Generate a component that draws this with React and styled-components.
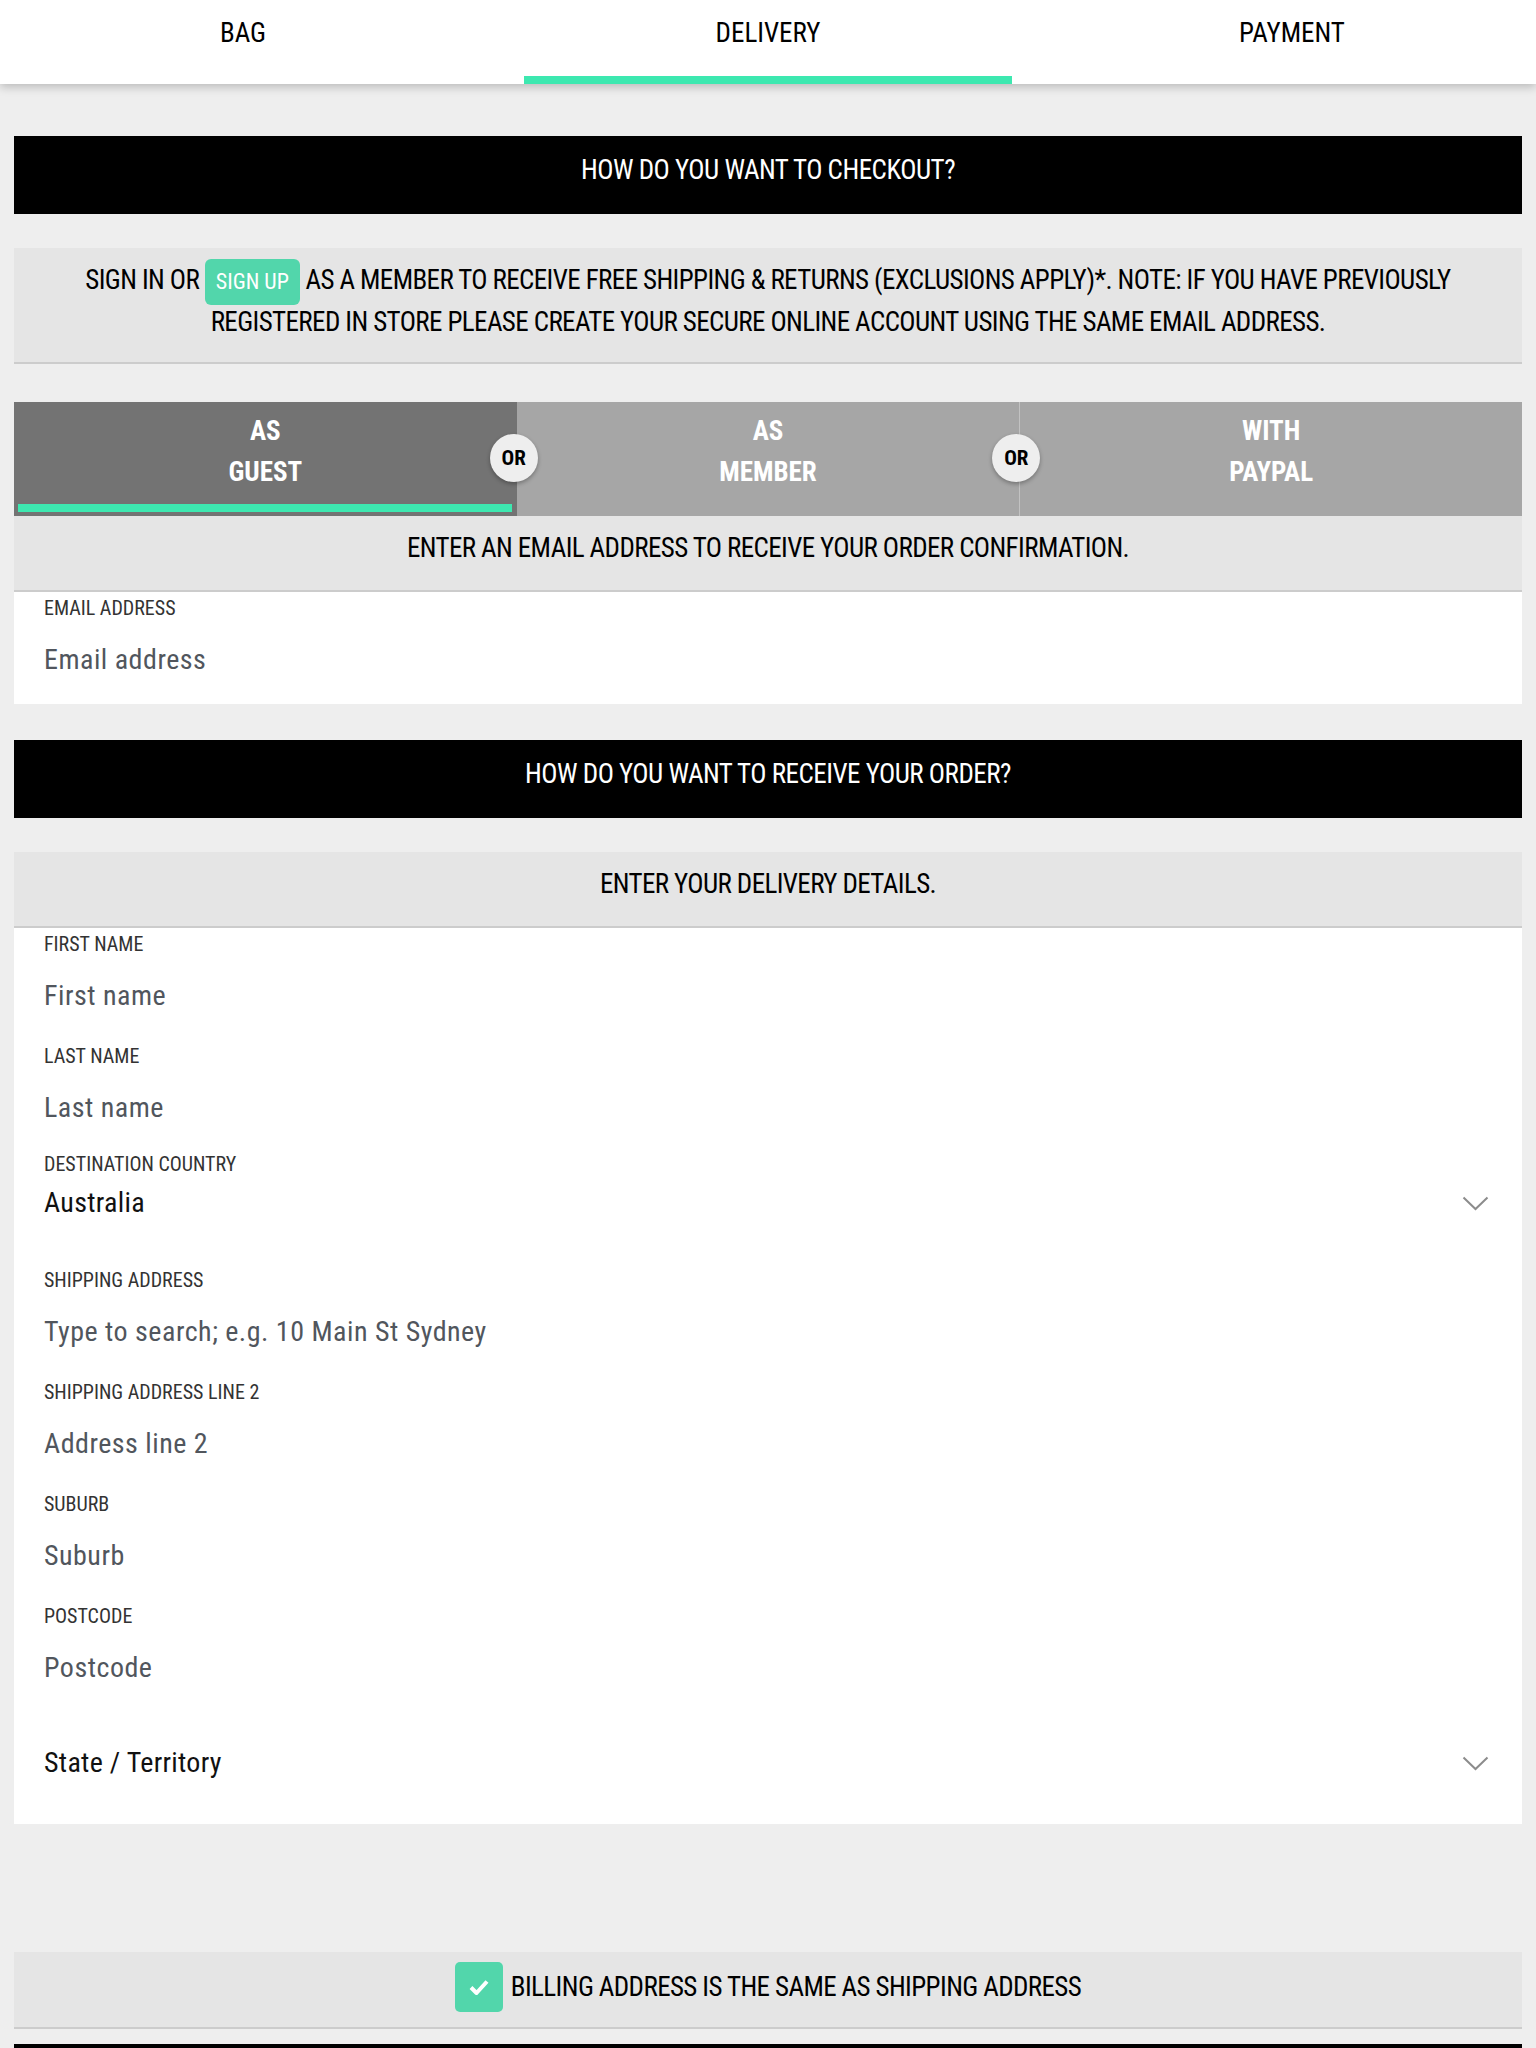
import React, { useState } from 'react';
import styled, { createGlobalStyle } from 'styled-components';

const GlobalStyle = createGlobalStyle`
  body {
    margin: 0;
    background: #eeeeee;
    font-family: Roboto, "Liberation Sans", Arial, sans-serif;
    font-stretch: 75%;
    color: #000;
  }
  * {
    box-sizing: border-box;
  }
`;

const StyledNav = styled.nav`
  display: grid;
  grid-template-columns: repeat(3, 1fr);
  height: 84px;
  background: #fff;
  box-shadow: 0 3px 9px rgba(0, 0, 0, 0.22);
  position: relative;
  z-index: 2;
`;
const StyledNavTab = styled.div`
  display: flex;
  flex-direction: column;
  justify-content: space-between;
  cursor: pointer;
`;
const StyledNavLabel = styled.span`
  padding: 18px ${(p) => p.$padR || 0}px 0 ${(p) => p.$padL || 0}px;
  text-align: center;
  font-size: 27px;
  line-height: 30px;
`;
const StyledNavBar = styled.span`
  height: 8px;
  margin: 0 12px;
  background: ${(p) => (p.$active ? '#3de8b0' : 'transparent')};
`;

const StyledMain = styled.main`
  display: flex;
  flex-direction: column;
  padding: 52px 14px 0;
`;
const StyledBanner = styled.div`
  background: #000;
  color: #fff;
  height: 78px;
  padding-top: 19px;
  margin-top: ${(p) => p.$mt || 0}px;
  text-align: center;
  font-size: 27px;
  letter-spacing: -0.5px;
  line-height: 30px;
`;
const StyledNote = styled.div`
  background: #e5e5e5;
  border-bottom: 2px solid #cccccc;
  margin-top: ${(p) => p.$mt || 0}px;
  padding: ${(p) => p.$pad || '17px 30px 0'};
  height: ${(p) => p.$h}px;
  text-align: center;
  font-size: 27px;
  letter-spacing: -0.6px;
  line-height: ${(p) => p.$lh || 30}px;
`;
const StyledSignUp = styled.a`
  display: inline-block;
  background: #52d6ab;
  color: #fff;
  font-size: 22px;
  letter-spacing: 0;
  line-height: 24px;
  padding: 11px 11px;
  margin: -6px 0;
  border-radius: 6px;
  text-decoration: none;
  cursor: pointer;
`;

const StyledToggle = styled.div`
  display: grid;
  grid-template-columns: repeat(3, 1fr);
  height: 114px;
  margin-top: 38px;
`;
const StyledOption = styled.div`
  position: relative;
  display: flex;
  flex-direction: column;
  align-items: center;
  padding-top: 9px;
  background: ${(p) => (p.$active ? '#737373' : '#a6a6a6')};
  border-left: ${(p) => (p.$divider ? '1px solid #c2c2c2' : 'none')};
  color: #fff;
  font-weight: 700;
  font-size: 27px;
  line-height: 41px;
  cursor: pointer;
`;
const StyledOptionBar = styled.span`
  align-self: stretch;
  margin: auto 5px 4px 4px;
  height: 8px;
  background: ${(p) => (p.$active ? '#3de8b0' : 'transparent')};
`;
const StyledOr = styled.span`
  position: absolute;
  right: -21px;
  top: 32px;
  z-index: 1;
  width: 48px;
  height: 48px;
  border-radius: 50%;
  background: #eeeeee;
  box-shadow: 0 2px 4px rgba(0, 0, 0, 0.3);
  display: flex;
  align-items: center;
  justify-content: center;
  color: #000;
  font-size: 21px;
  line-height: 1;
  font-weight: 700;
`;

const StyledPanel = styled.div`
  background: #fff;
  display: flex;
  flex-direction: column;
`;
const StyledField = styled.label`
  display: flex;
  flex-direction: column;
  height: 112px;
  padding: ${(p) => (p.$select ? 0 : 4)}px 33px 0 30px;
`;
const StyledLabel = styled.span`
  display: block;
  height: 24px;
  font-size: 20px;
  line-height: 24px;
  color: #333;
`;
const StyledInput = styled.input`
  margin-top: 22px;
  height: 36px;
  border: none;
  padding: 0;
  background: transparent;
  font-family: inherit;
  font-size: 28px;
  font-stretch: 75%;
  letter-spacing: 0.5px;
  line-height: 36px;
  color: #222;
  outline: none;

  &::placeholder {
    color: #51565d;
  }
`;
const StyledSelect = styled.div`
  margin-top: 9px;
  height: 36px;
  display: flex;
  align-items: center;
  justify-content: space-between;
  font-size: 28px;
  letter-spacing: 0.3px;
  line-height: 36px;
  color: #111;
  cursor: pointer;
`;

const StyledBilling = styled.div`
  margin-top: 128px;
  background: #e5e5e5;
  border-bottom: 2px solid #cccccc;
  height: 77px;
  padding: 10px 0 15px;
  display: flex;
  align-items: center;
  justify-content: center;
  gap: 8px;
  font-size: 27px;
  letter-spacing: -0.6px;
  cursor: pointer;
`;
const StyledCheck = styled.span`
  width: 48px;
  height: 50px;
  border-radius: 5px;
  background: #52d6ab;
  display: flex;
  align-items: center;
  justify-content: center;
`;

function Chevron() {
  return (
    <svg width="27" height="15" viewBox="0 0 27 15" fill="none">
      <polyline points="1.5,1.5 13.5,13 25.5,1.5" stroke="#8c8c8c" strokeWidth="2" />
    </svg>
  );
}

function TextField({ label, placeholder }) {
  return (
    <StyledField>
      <StyledLabel>{label}</StyledLabel>
      <StyledInput type="text" placeholder={placeholder} autoComplete="off" />
    </StyledField>
  );
}

function SelectField({ label, value }) {
  return (
    <StyledField $select>
      <StyledLabel>{label}</StyledLabel>
      <StyledSelect>
        <span>{value}</span>
        <Chevron />
      </StyledSelect>
    </StyledField>
  );
}

const steps = [
  { name: 'BAG', padR: 26 },
  { name: 'DELIVERY' },
  { name: 'PAYMENT', padL: 24 },
];

const options = [
  { top: 'AS', bottom: 'GUEST' },
  { top: 'AS', bottom: 'MEMBER' },
  { top: 'WITH', bottom: 'PAYPAL' },
];

export default function App() {
  const [option, setOption] = useState(0);
  const [same, setSame] = useState(true);

  return (
    <>
      <GlobalStyle />
      <StyledNav>
        {steps.map((s) => (
          <StyledNavTab key={s.name}>
            <StyledNavLabel $padL={s.padL} $padR={s.padR}>
              {s.name}
            </StyledNavLabel>
            <StyledNavBar $active={s.name === 'DELIVERY'} />
          </StyledNavTab>
        ))}
      </StyledNav>

      <StyledMain>
        <StyledBanner>HOW DO YOU WANT TO CHECKOUT?</StyledBanner>

        <StyledNote $mt={34} $h={116} $lh={42} $pad="11px 30px 0">
          SIGN IN OR <StyledSignUp>SIGN UP</StyledSignUp> AS A MEMBER TO RECEIVE FREE
          SHIPPING &amp; RETURNS (EXCLUSIONS APPLY)*. NOTE: IF YOU HAVE PREVIOUSLY
          <br />
          REGISTERED IN STORE PLEASE CREATE YOUR SECURE ONLINE ACCOUNT USING THE SAME
          EMAIL ADDRESS.
        </StyledNote>

        <StyledToggle>
          {options.map((o, i) => (
            <StyledOption
              key={o.bottom}
              $active={option === i}
              $divider={i === 2}
              onClick={() => setOption(i)}
            >
              <span>{o.top}</span>
              <span>{o.bottom}</span>
              <StyledOptionBar $active={option === i} />
              {i < 2 && <StyledOr>OR</StyledOr>}
            </StyledOption>
          ))}
        </StyledToggle>

        <StyledNote $h={76}>
          ENTER AN EMAIL ADDRESS TO RECEIVE YOUR ORDER CONFIRMATION.
        </StyledNote>
        <StyledPanel>
          <TextField label="EMAIL ADDRESS" placeholder="Email address" />
        </StyledPanel>

        <StyledBanner $mt={36}>HOW DO YOU WANT TO RECEIVE YOUR ORDER?</StyledBanner>

        <StyledNote $mt={34} $h={76}>
          ENTER YOUR DELIVERY DETAILS.
        </StyledNote>
        <StyledPanel>
          <TextField label="FIRST NAME" placeholder="First name" />
          <TextField label="LAST NAME" placeholder="Last name" />
          <SelectField label="DESTINATION COUNTRY" value="Australia" />
          <TextField
            label="SHIPPING ADDRESS"
            placeholder="Type to search; e.g. 10 Main St Sydney"
          />
          <TextField label="SHIPPING ADDRESS LINE 2" placeholder="Address line 2" />
          <TextField label="SUBURB" placeholder="Suburb" />
          <TextField label="POSTCODE" placeholder="Postcode" />
          <SelectField label="" value="State / Territory" />
        </StyledPanel>

        <StyledBilling onClick={() => setSame(!same)}>
          <StyledCheck>
            {same && (
              <svg width="20" height="16" viewBox="0 0 20 16">
                <path
                  d="M2 8.5 L7.5 14 L18 2.5"
                  stroke="#fff"
                  strokeWidth="4"
                  fill="none"
                  strokeLinejoin="round"
                />
              </svg>
            )}
          </StyledCheck>
          <span>BILLING ADDRESS IS THE SAME AS SHIPPING ADDRESS</span>
        </StyledBilling>

        <StyledBanner $mt={15} />
      </StyledMain>
    </>
  );
}
